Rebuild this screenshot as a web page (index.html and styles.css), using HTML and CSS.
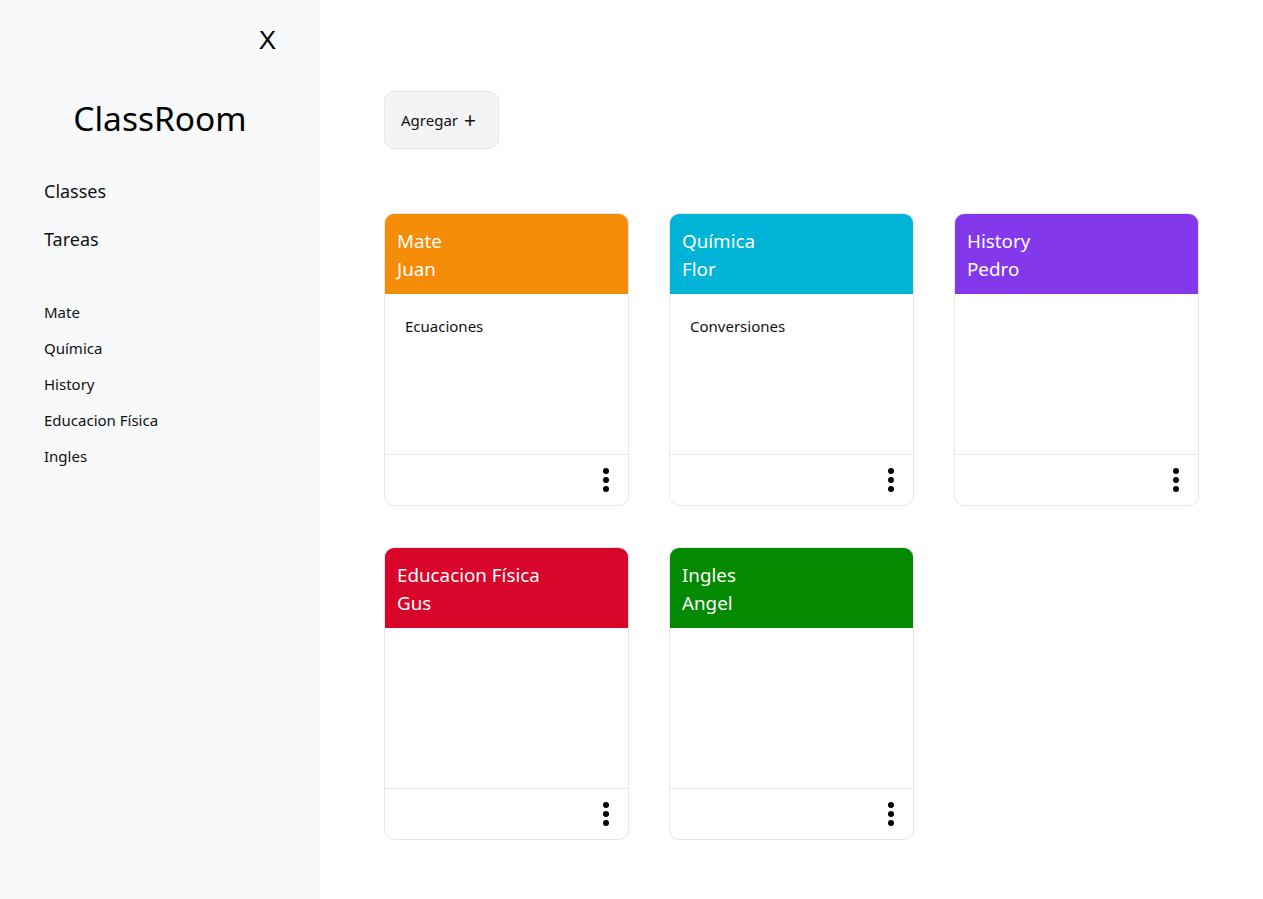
FILE: index.html
```html
<!DOCTYPE html>
<html lang="es">
<head>
<meta charset="utf-8">
<title>ClassRoom</title>
<link rel="stylesheet" href="styles.css">
</head>
<body>
<div class="app">
  <aside class="sidebar">
    <div class="close-row"><button class="close">X</button></div>
    <h1 class="brand">ClassRoom</h1>
    <nav class="main-nav">
      <a href="#">Classes</a>
      <a href="#">Tareas</a>
    </nav>
    <nav class="class-nav">
      <a href="#">Mate</a>
      <a href="#">Química</a>
      <a href="#">History</a>
      <a href="#">Educacion Física</a>
      <a href="#">Ingles</a>
    </nav>
  </aside>
  <main class="content">
    <button class="add-btn">Agregar <span class="plus">+</span></button>
    <div class="grid">
      <div class="card">
        <div class="card-head orange"><div>Mate</div><div>Juan</div></div>
        <div class="card-body">Ecuaciones</div>
        <div class="card-foot"><span class="dots"><i></i><i></i><i></i></span></div>
      </div>
      <div class="card">
        <div class="card-head cyan"><div>Química</div><div>Flor</div></div>
        <div class="card-body">Conversiones</div>
        <div class="card-foot"><span class="dots"><i></i><i></i><i></i></span></div>
      </div>
      <div class="card">
        <div class="card-head purple"><div>History</div><div>Pedro</div></div>
        <div class="card-body"></div>
        <div class="card-foot"><span class="dots"><i></i><i></i><i></i></span></div>
      </div>
      <div class="card">
        <div class="card-head red"><div>Educacion Física</div><div>Gus</div></div>
        <div class="card-body"></div>
        <div class="card-foot"><span class="dots"><i></i><i></i><i></i></span></div>
      </div>
      <div class="card">
        <div class="card-head green"><div>Ingles</div><div>Angel</div></div>
        <div class="card-body"></div>
        <div class="card-foot"><span class="dots"><i></i><i></i><i></i></span></div>
      </div>
    </div>
  </main>
</div>
</body>
</html>
```
FILE: styles.css
```css
* { box-sizing: border-box; }
html, body { margin: 0; padding: 0; }
body {
  font-family: "Noto Sans", "Open Sans", sans-serif;
  color: #111;
  background: #fff;
}
.app {
  display: flex;
  min-height: 899px;
}
.sidebar {
  width: 320px;
  flex: none;
  background: #f8f9fb;
  padding: 24px 44px 0 44px;
}
.close-row {
  display: flex;
  justify-content: flex-end;
}
.close {
  border: none;
  background: none;
  font-family: "Liberation Sans", sans-serif;
  font-size: 26px;
  padding: 0;
  color: #000;
  line-height: 32px;
}
.brand {
  margin: 40px 0 0 0;
  text-align: center;
  font-weight: 400;
  font-size: 33.5px;
  line-height: 44px;
  color: #000;
}
.main-nav {
  display: flex;
  flex-direction: column;
  gap: 20px;
  margin-top: 37px;
}
.main-nav a {
  color: #111;
  text-decoration: none;
  font-size: 18px;
  line-height: 28px;
}
.class-nav {
  display: flex;
  flex-direction: column;
  gap: 16px;
  margin-top: 49px;
}
.class-nav a {
  color: #111;
  text-decoration: none;
  font-size: 15px;
  line-height: 20px;
}
.content {
  flex: 1;
  padding: 91px 0 0 64px;
}
.add-btn {
  display: flex;
  align-items: center;
  gap: 6px;
  height: 58px;
  width: 115px;
  padding: 0 16px;
  background: #f3f4f6;
  border: 1px solid #e5e7eb;
  border-radius: 10px;
  font-family: inherit;
  font-size: 15px;
  color: #111;
}
.plus {
  font-size: 21px;
  line-height: 1;
  font-weight: 400;
}
.grid {
  margin-top: 64px;
  display: grid;
  grid-template-columns: repeat(3, 245px);
  column-gap: 40px;
  row-gap: 41px;
}
.card {
  border: 1px solid #e5e7eb;
  border-radius: 10px;
  overflow: hidden;
  height: 293px;
  display: flex;
  flex-direction: column;
  background: #fff;
}
.card-head {
  height: 80px;
  padding: 13px 12px 11px;
  color: #fff;
  font-size: 18.8px;
  line-height: 28px;
  flex: none;
}
.orange { background: #f48c06; }
.cyan { background: #00b4d8; }
.purple { background: #8338ec; }
.red { background: #d90429; }
.green { background: #038a00; }
.card-body {
  height: 160px;
  flex: none;
  padding: 22px 20px;
  font-size: 15px;
  line-height: 20px;
  color: #111;
}
.card-foot {
  flex: 1;
  border-top: 1px solid #e5e7eb;
  display: flex;
  align-items: center;
  justify-content: flex-end;
  padding-right: 19px;
}
.dots {
  display: flex;
  flex-direction: column;
  gap: 3px;
}
.dots i {
  display: block;
  width: 6px;
  height: 6px;
  border-radius: 50%;
  background: #000;
}
```
